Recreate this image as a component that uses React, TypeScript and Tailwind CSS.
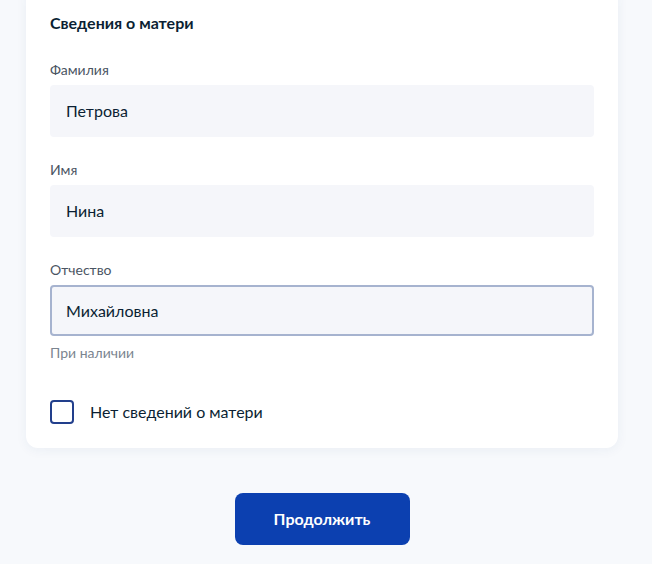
const font = { fontFamily: 'Lato, "Noto Sans", sans-serif' };

function Field({ label, value, active, hint }: { label: string; value: string; active?: boolean; hint?: string }) {
  return (
    <div className="flex flex-col">
      <label className="mb-[7px] text-[14px] leading-4 text-[#4b5563]">{label}</label>
      <div
        className={
          active
            ? 'flex h-[51px] items-center rounded-[4px] border-2 border-[#a6b3cf] bg-[#f5f6fa] px-[14px] text-[16px] text-[#0b1f33]'
            : 'flex h-[52px] items-center rounded-[4px] bg-[#f5f6fa] px-4 text-[16px] text-[#0b1f33]'
        }
      >
        {value}
      </div>
      {hint && <div className="mt-[9px] text-[14px] leading-4 text-[#7b8590]">{hint}</div>}
    </div>
  );
}

export default function App() {
  return (
    <div style={font} className="min-h-[580px] w-full bg-[#f7f9fc]">
      <div className="px-[26px] pr-[34px]">
        <div className="-mt-4 rounded-xl bg-white px-6 pt-[29px] pb-[24px] shadow-[0_2px_12px_rgba(30,60,120,0.06)]">
          <h2 className="text-[16px] font-bold leading-5 text-[#0b1f33]">Сведения о матери</h2>
          <div className="mt-[29px] flex flex-col gap-[25px]">
            <Field label="Фамилия" value="Петрова" />
            <Field label="Имя" value="Нина" />
            <Field label="Отчество" value="Михайловна" active hint="При наличии" />
          </div>
          <div className="mt-[39px] flex items-center gap-4">
            <span className="h-6 w-6 rounded-[4px] border-2 border-[#223f8c] bg-white" />
            <span className="text-[16px] text-[#0b1f33]">Нет сведений о матери</span>
          </div>
        </div>
      </div>
      <div className="mt-[45px] flex justify-center">
        <button className="ml-[-8px] h-[52px] w-[175px] rounded-lg bg-[#0c40b0] text-[16px] font-bold text-white">
          Продолжить
        </button>
      </div>
    </div>
  );
}
